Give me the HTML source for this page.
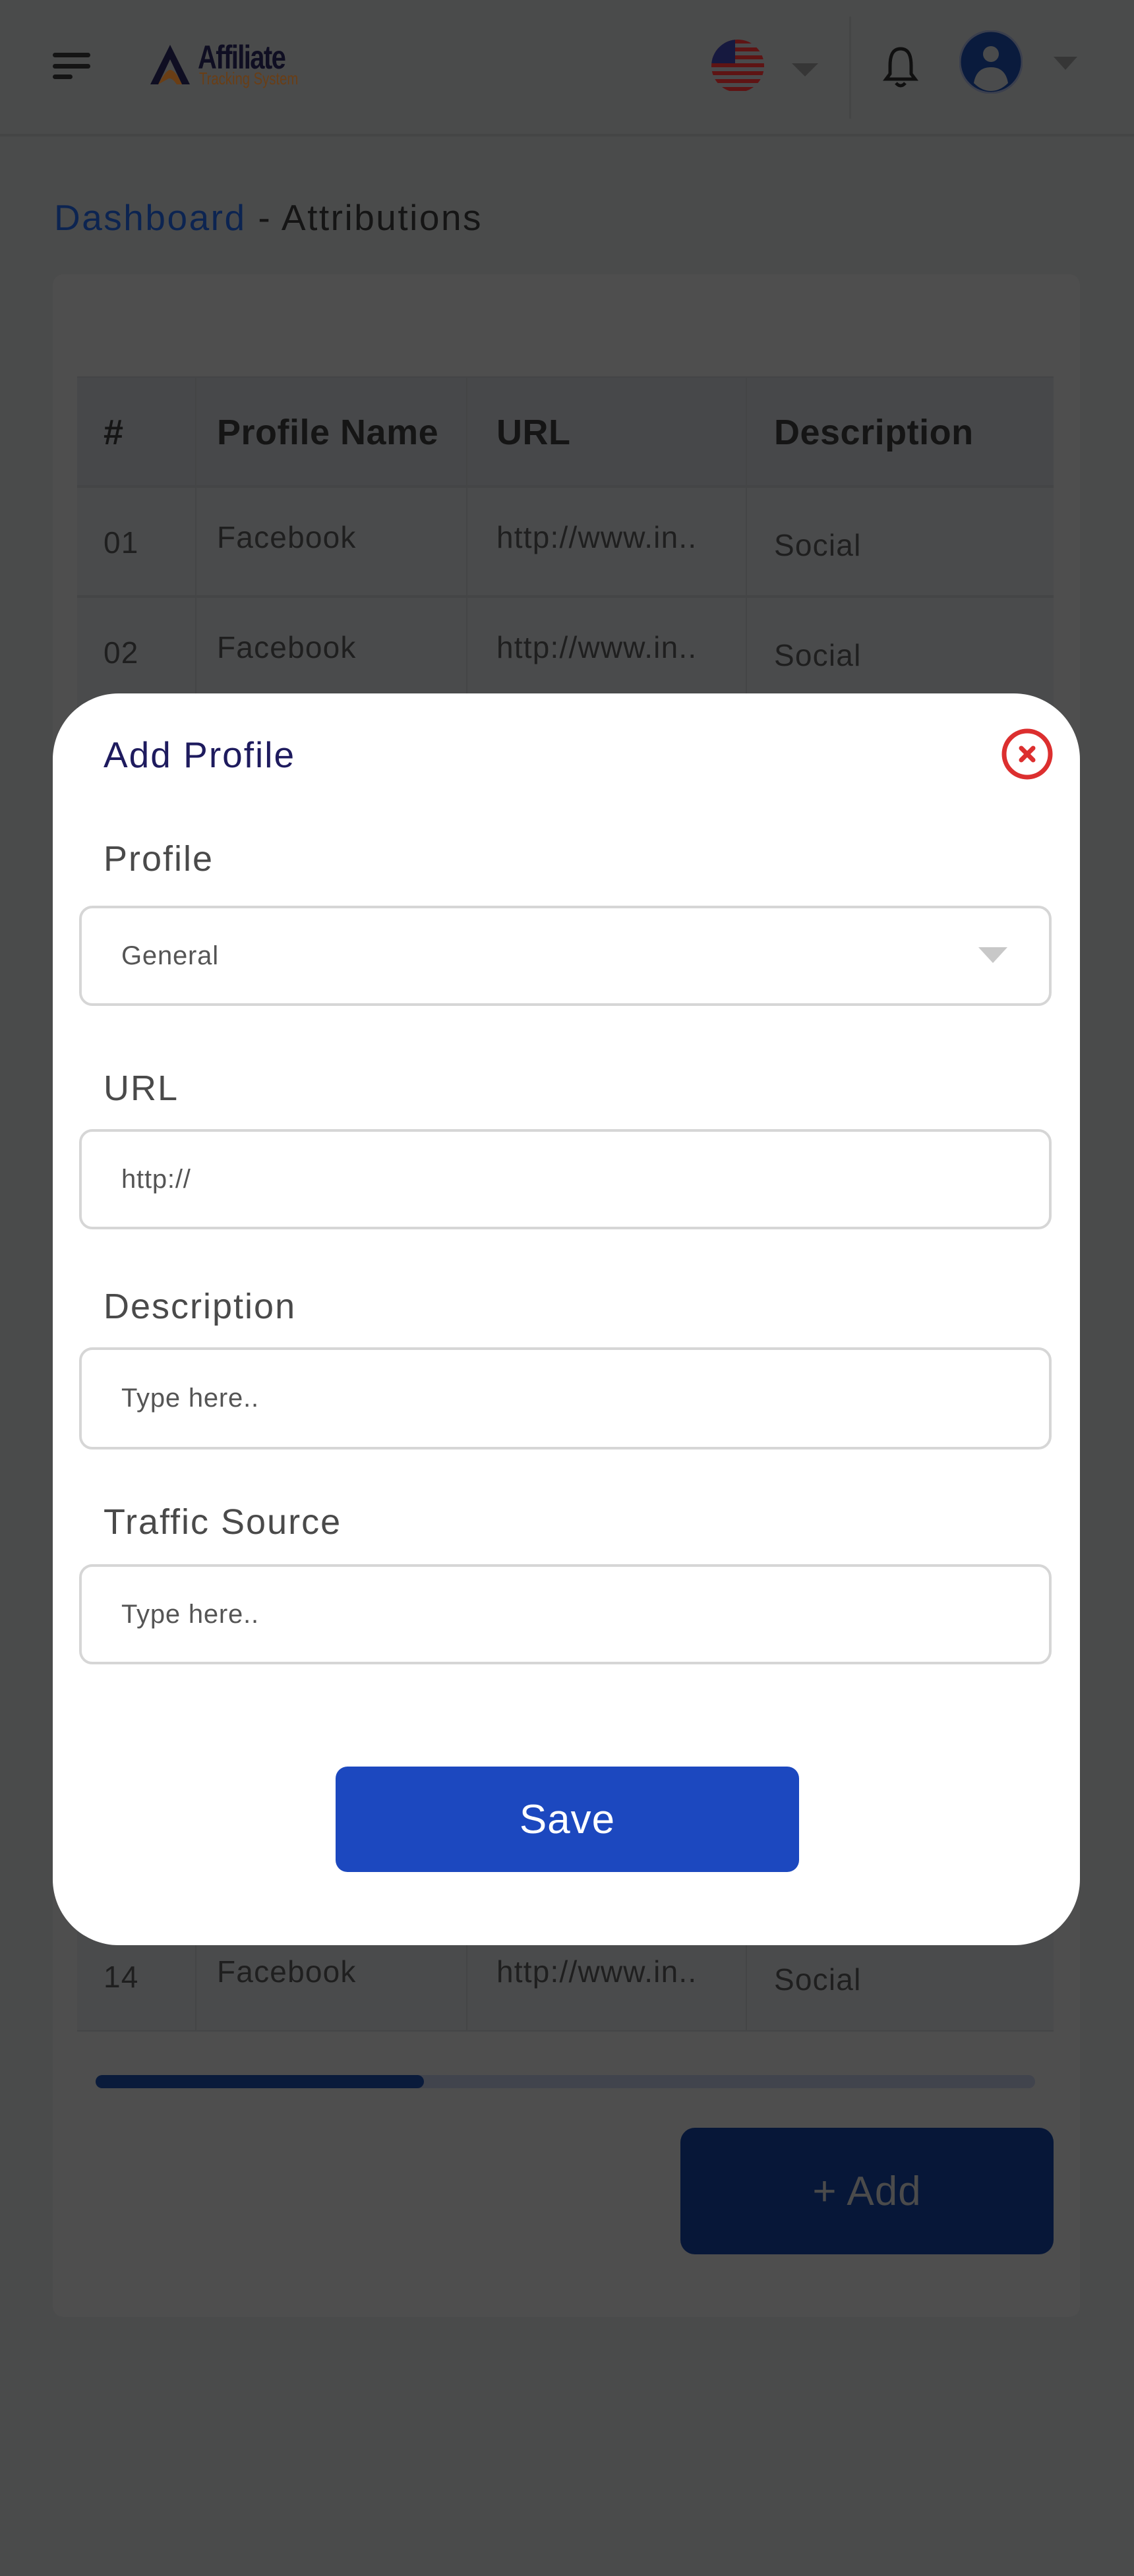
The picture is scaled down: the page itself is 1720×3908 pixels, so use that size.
<!DOCTYPE html>
<html><head><meta charset="utf-8">
<style>
*{margin:0;padding:0;box-sizing:border-box}
body{width:1720px;height:3908px;background:#4a4b4b;position:relative;overflow:hidden;font-family:"Liberation Sans",Arial,sans-serif}
.a{position:absolute}
.cell{position:absolute;background:#4a4b4c;}
.t{position:absolute;font-size:46px;color:#1f1f1f;white-space:nowrap;letter-spacing:1.2px}
.h{position:absolute;font-size:54px;color:#151515;font-weight:bold;white-space:nowrap;letter-spacing:0.5px}
.lbl{position:absolute;left:157px;font-size:54px;color:#4a4a4a;letter-spacing:2px}
.inp{position:absolute;left:120px;width:1475px;border:4px solid #d6d6d6;border-radius:20px;background:#fff;font-size:40px;color:#555;padding-left:60px;display:flex;align-items:center;letter-spacing:0.8px}
</style></head><body>
<div class="a" style="left:0;top:0;width:1720px;height:207px;background:#4a4b4b;border-bottom:4px solid #444545"></div>
<div class="a" style="left:80px;top:80px;width:57px;height:7px;background:#141414;border-radius:4px"></div>
<div class="a" style="left:80px;top:97px;width:57px;height:7px;background:#141414;border-radius:4px"></div>
<div class="a" style="left:80px;top:113px;width:30px;height:7px;background:#141414;border-radius:4px"></div>
<svg class="a" style="left:226px;top:66px" width="80" height="66" viewBox="0 0 80 66"><polygon points="32,2 2,62 14,62 32,24 50,62 62,62" fill="#0f0e22"/><path d="M14,62 Q26,40 32,40 Q40,40 50,62 L42,62 Q34,50 28,54 Z" fill="#6a3e15"/></svg>
<div class="a" style="left:300px;top:58px;font-size:50px;color:#0f0e22;font-weight:bold;letter-spacing:-2px;transform:scaleX(0.8);transform-origin:left">Affiliate</div>
<div class="a" style="left:302px;top:104px;font-size:26px;color:#6a3e15;transform:scaleX(0.78);transform-origin:left">Tracking System</div>
<svg class="a" style="left:1079px;top:60px" width="80" height="80" viewBox="0 0 80 80"><defs><clipPath id="c"><circle cx="40" cy="40" r="40"/></clipPath></defs><g clip-path="url(#c)"><rect width="80" height="80" fill="#4a4a4c"/><g fill="#5e1414"><rect y="0" width="80" height="6"/><rect y="12" width="80" height="6"/><rect y="24" width="80" height="6"/><rect y="36" width="80" height="6"/><rect y="48" width="80" height="6"/><rect y="60" width="80" height="6"/><rect y="72" width="80" height="6"/></g><rect width="36" height="36" fill="#16193f"/></g></svg>
<div class="a" style="left:1201px;top:96px;border-left:20px solid transparent;border-right:20px solid transparent;border-top:20px solid #363636"></div>
<div class="a" style="left:1288px;top:25px;width:3px;height:155px;background:#444545"></div>
<svg class="a" style="left:1338px;top:70px" width="56" height="64" viewBox="0 0 56 64"><path d="M28,4 C14,4 12,18 12,30 L12,42 L6,50 L50,50 L44,42 L44,30 C44,18 42,4 28,4 Z" fill="none" stroke="#101010" stroke-width="5"/><path d="M21,56 Q28,64 35,56" fill="none" stroke="#101010" stroke-width="5"/></svg>
<svg class="a" style="left:1455px;top:46px" width="96" height="96" viewBox="0 0 96 96"><circle cx="48" cy="48" r="47" fill="#0a1b3d" stroke="#3b3f4d" stroke-width="3"/><circle cx="48" cy="36" r="12" fill="#4a4b4c"/><path d="M22,80 Q26,56 48,56 Q70,56 74,80 Q62,92 48,92 Q34,92 22,80 Z" fill="#4a4b4c"/></svg>
<div class="a" style="left:1598px;top:86px;border-left:18px solid transparent;border-right:18px solid transparent;border-top:20px solid #363636"></div>
<div class="a" style="left:82px;top:298px;font-size:55px;white-space:nowrap;letter-spacing:2.5px"><span style="color:#0c2451">Dashboard</span><span style="color:#151515"> - Attributions</span></div>
<div class="a" style="left:80px;top:416px;width:1558px;height:3099px;background:#4e4e4e;border-radius:16px"></div>
<div class="a" style="left:117px;top:571px;width:1481px;height:2511px;background:#444546"></div>
<div id="tbl"></div>
<div class="a" style="left:145px;top:3148px;width:1425px;height:20px;background:#41444d;border-radius:10px"></div>
<div class="a" style="left:145px;top:3148px;width:498px;height:20px;background:#0a1b3b;border-radius:10px"></div>
<div class="a" style="left:1032px;top:3228px;width:566px;height:192px;background:#071738;border-radius:22px;display:flex;align-items:center;justify-content:center;font-size:62px;color:#4b4b4b;letter-spacing:1px">+ Add</div>
<div class="a" style="left:80px;top:1052px;width:1558px;height:1899px;background:#fff;border-radius:100px"></div>
<div class="a" style="left:157px;top:1113px;font-size:55px;color:#1e1b5e;letter-spacing:2px">Add Profile</div>
<svg class="a" style="left:1519px;top:1105px" width="78" height="78" viewBox="0 0 78 78"><circle cx="39" cy="39" r="35" fill="none" stroke="#dc2f2f" stroke-width="7"/><path d="M30,30 L48,48 M48,30 L30,48" stroke="#dc2f2f" stroke-width="7" stroke-linecap="round"/></svg>
<div class="lbl" style="top:1272px">Profile</div>
<div class="inp" style="top:1374px;height:152px">General</div>
<div class="a" style="left:1484px;top:1437px;border-left:22px solid transparent;border-right:22px solid transparent;border-top:24px solid #c8c8c8"></div>
<div class="lbl" style="top:1620px">URL</div>
<div class="inp" style="top:1713px;height:152px">http://</div>
<div class="lbl" style="top:1951px">Description</div>
<div class="inp" style="top:2044px;height:155px">Type here..</div>
<div class="lbl" style="top:2278px">Traffic Source</div>
<div class="inp" style="top:2373px;height:152px">Type here..</div>
<div class="a" style="left:509px;top:2680px;width:703px;height:160px;background:#1c48bf;border-radius:18px;display:flex;align-items:center;justify-content:center;font-size:62px;color:#fff;letter-spacing:1px">Save</div>
<script>
var cols=[117,296,707,1131,1598],h='';
function row(y,hh,txt,hd){for(var i=0;i<4;i++){h+='<div class="cell" style="left:'+(cols[i]+(i?2:0))+'px;top:'+(y+2)+'px;width:'+(cols[i+1]-cols[i]-(i?2:0))+'px;height:'+(hh-4)+'px;'+(hd?'background:#47484a':'')+'"></div>';}
var xs=[157,329,753,1174],dy=hd?[0,0,0,0]:[0,-8,-8,0];
for(var i=0;i<4;i++)h+='<div class="'+(hd?'h':'t')+'" style="left:'+xs[i]+'px;top:'+(y+hh/2-30+dy[i]+(hd?0:4)+(i==3&&!hd?4:0))+'px">'+txt[i]+'</div>';}
row(571,167,['#','Profile Name','URL','Description'],1);
for(var r=0;r<14;r++){var n=r+1;row(738+r*167.4,167.4,[(n<10?'0':'')+n,'Facebook','http://www.in..','Social'],0);}
document.getElementById('tbl').outerHTML=h;
</script>
</body></html>
